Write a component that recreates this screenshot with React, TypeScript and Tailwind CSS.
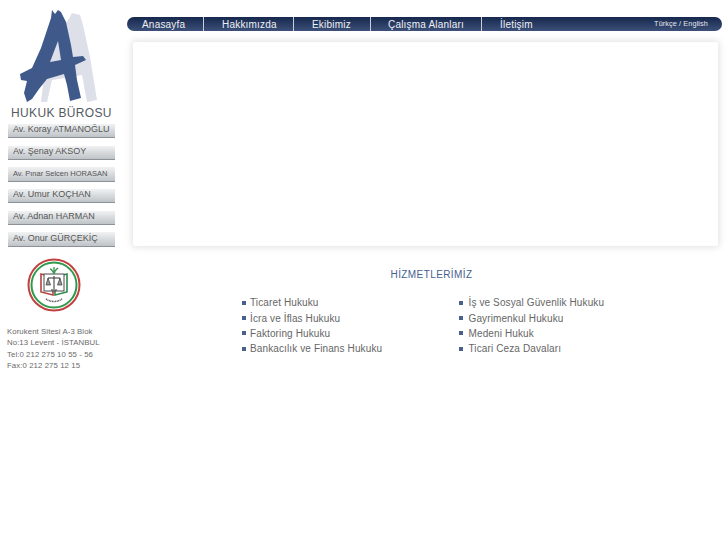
const lawyers = [
  { name: "Av. Koray ATMANOĞLU", small: false },
  { name: "Av. Şenay AKSOY", small: false },
  { name: "Av. Pınar Selcen HORASAN", small: true },
  { name: "Av. Umur KOÇHAN", small: false },
  { name: "Av. Adnan HARMAN", small: false },
  { name: "Av. Onur GÜRÇEKİÇ", small: false },
];

const navItems = [
  { label: "Anasayfa", width: "w-[77px]", pad: "pl-[15px]" },
  { label: "Hakkımızda", width: "w-[90px]", pad: "pl-[18px]" },
  { label: "Ekibimiz", width: "w-[77px]", pad: "pl-[18px]" },
  { label: "Çalışma Alanları", width: "w-[111px]", pad: "pl-[17px]" },
  { label: "İletişim", width: "w-[100px]", pad: "pl-[18px]" },
];

const leftServices = [
  "Ticaret Hukuku",
  "İcra ve İflas Hukuku",
  "Faktoring Hukuku",
  "Bankacılık ve Finans Hukuku",
];

const rightServices = [
  "İş ve Sosyal Güvenlik Hukuku",
  "Gayrimenkul Hukuku",
  "Medeni Hukuk",
  "Ticari Ceza Davaları",
];

const LogoMark = () => (
  <svg width="107" height="104" viewBox="8 0 107 104" className="block">
    {/* arka gri harf */}
    <path
      d="M70 17 L72 13 L80 15 L83 25 L90 57 L97 100 L87 102 L82 75 L52 80 L47 102 L41 102 L43 85 L55 40 Z"
      fill="#dde0e9"
    />
    {/* ön mavi harf */}
    <path
      d="M51 18 L52 10 L55 14 L58 10 L61 12 L66 22 L71 45 L73 57 L83 56 L86 60 L75 65 L77 80 L81 98 L70 101 L67 85 L64 74 L47 79 L39 89 L32 99 L27 102 L24 93 L27 81 L21 80 L20 74 L32 68 L41 48 Z M58 41 L61 60 L50 62 Z"
      fill="#3f5a8a"
      fillRule="evenodd"
    />
  </svg>
);

const BarBadge = () => (
  <svg width="54" height="56" viewBox="0 0 54 56" className="block">
    <circle cx="27" cy="28" r="25.5" fill="none" stroke="#c2403f" strokeWidth="2" />
    <circle cx="27" cy="28" r="22.5" fill="none" stroke="#2f9a4c" strokeWidth="2" />
    <path d="M14 17 L14 35 L26 38 L26 20 Z" fill="none" stroke="#b5423f" strokeWidth="1.6" />
    <path d="M40 17 L40 35 L28 38 L28 20 Z" fill="none" stroke="#2f8a4a" strokeWidth="1.6" />
    <rect x="17" y="17" width="20" height="17" fill="#fff" stroke="#4a4a4a" strokeWidth="1" />
    <path d="M27 19 L27 32 M21 21 L33 21 M24 33 L30 33" stroke="#333" strokeWidth="1" />
    <path d="M19 28 L21 21 L23.5 28 Z M30.5 28 L33 21 L35 28 Z" fill="#999" stroke="#333" strokeWidth="0.7" />
    <path d="M27 17 C25 13 25 12 23 12 M27 17 C28 12 30 12 31 11 M27 15 L27 10" stroke="#3f9a55" strokeWidth="1.4" fill="none" />
    <path d="M19 42 Q27 47 35 42" stroke="#555" strokeWidth="1.5" fill="none" strokeDasharray="1 0.6" />
  </svg>
);

const ServiceList = ({ items, className, gap }: { items: string[]; className: string; gap: string }) => (
  <ul className={className}>
    {items.map((item) => (
      <li key={item} className="flex items-center h-[15.4px] text-[10px] tracking-[0.12px] text-[#666] whitespace-nowrap">
        <span className={`w-[4px] h-[4px] bg-[#46608f] shrink-0 ${gap}`} />
        {item}
      </li>
    ))}
  </ul>
);

export default function App() {
  return (
    <div className="flex w-[727px] h-[545px] bg-white overflow-hidden font-['Liberation_Sans',Arial,sans-serif]">
      {/* Sol kolon */}
      <aside className="w-[127px] shrink-0 pl-[8px]">
        <LogoMark />
        <div className="text-[12px] leading-[14px] tracking-[0.35px] text-[#555a5f] whitespace-nowrap pl-[3px] pt-[2px] h-[20px]">
          HUKUK BÜROSU
        </div>
        <nav className="flex flex-col gap-[7.5px] w-[107px]">
          {lawyers.map((l) => (
            <div
              key={l.name}
              className={`h-[14.2px] flex items-center pl-[5px] pb-[1px] whitespace-nowrap text-[#555] border-b border-[#8c9297] bg-gradient-to-b from-[#f1f2f3] to-[#bfc4c8] ${
                l.small ? "text-[7.5px]" : "text-[9px]"
              }`}
            >
              {l.name}
            </div>
          ))}
        </nav>
        <div className="pl-[19px] pt-[10px]">
          <BarBadge />
        </div>
        <address className="not-italic pt-[13px] -ml-[1px] text-[7.8px] leading-[11.6px] tracking-[0.08px] text-[#6a6a6a] whitespace-nowrap">
          <div>Korukent Sitesi A-3 Blok</div>
          <div>No:13 Levent - İSTANBUL</div>
          <div>Tel:0 212 275 10 55 - 56</div>
          <div>Fax:0 212 275 12 15</div>
        </address>
      </aside>

      {/* Sağ içerik */}
      <main className="w-[595px] pt-[17px]">
        <div className="relative flex h-[14px] rounded-full bg-gradient-to-b from-[#16284d] to-[#3d5079] text-[#eef0f4] text-[10px] tracking-[0.2px]">
          {navItems.map((item, i) => (
            <div
              key={item.label}
              className={`${item.width} ${item.pad} flex items-center whitespace-nowrap ${
                i < navItems.length - 1 ? "border-r border-[#c9ced8]" : ""
              }`}
            >
              {item.label}
            </div>
          ))}
          <div className="ml-auto pr-[14px] flex items-center text-[7.3px] tracking-[0.1px] whitespace-nowrap text-[#e6e8ee]">
            Türkçe / English
          </div>
        </div>

        <div className="ml-[6px] mt-[11px] w-[585px] h-[204px] bg-white rounded-[3px] shadow-[0_0_6px_2px_rgba(0,0,0,0.1)]" />

        <h2 className="mt-[22px] pl-[14px] text-center text-[10px] leading-[14px] font-normal tracking-[0.4px] text-[#46608f]">
          HİZMETLERİMİZ
        </h2>

        <div className="flex mt-[13px] pl-[115px]">
          <ServiceList items={leftServices} className="w-[217px]" gap="mr-[4px]" />
          <ServiceList items={rightServices} className="" gap="mr-[5.5px]" />
        </div>
      </main>
    </div>
  );
}
